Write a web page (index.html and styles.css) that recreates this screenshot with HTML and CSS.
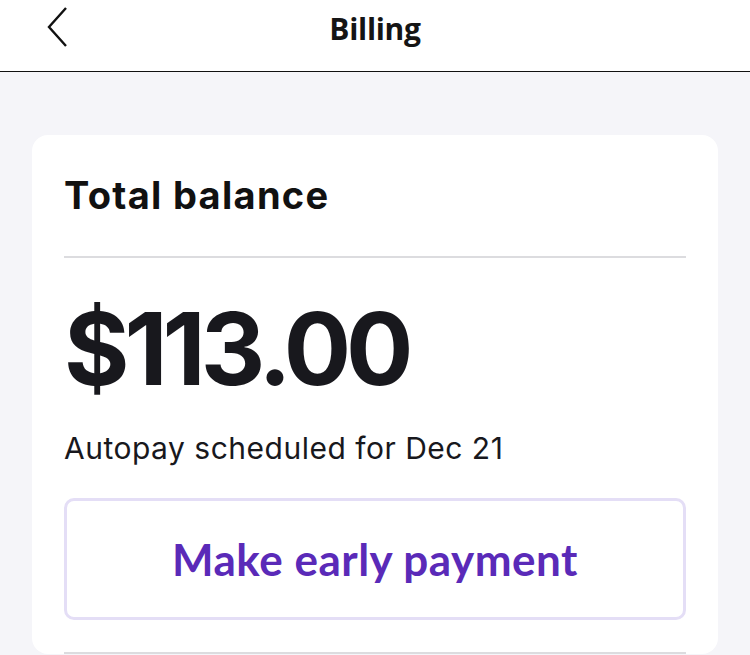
FILE: index.html
```html
<!DOCTYPE html>
<html>
<head>
<meta charset="utf-8">
<link rel="stylesheet" href="styles.css">
</head>
<body>
<header class="topbar">
  <button class="back" aria-label="Back">
    <svg width="24" height="42" viewBox="0 0 24 42"><path d="M20 2 L3 21 L20 40" fill="none" stroke="#111" stroke-width="2.4" stroke-linejoin="miter"/></svg>
  </button>
  <h1 class="title">Billing</h1>
</header>
<main class="content">
  <section class="card">
    <h2 class="card-title">Total balance</h2>
    <hr class="divider">
    <div class="amount">$113.00</div>
    <p class="autopay">Autopay scheduled for Dec 21</p>
    <button class="pay-btn">Make early payment</button>
    <hr class="divider bottom">
  </section>
</main>
</body>
</html>
```
FILE: styles.css
```css
* { box-sizing: border-box; }
html, body { margin: 0; padding: 0; }
body {
  width: 750px;
  height: 655px;
  overflow: hidden;
  background: #f5f5f9;
  font-family: Inter, "Liberation Sans", sans-serif;
  color: #15151a;
}
.topbar {
  height: 72px;
  background: #fff;
  border-bottom: 1.5px solid #111;
  display: flex;
  align-items: center;
  justify-content: center;
  position: relative;
}
.back {
  position: absolute;
  left: 46px;
  top: 6px;
  background: none;
  border: 0;
  padding: 0;
  display: flex;
}
.title {
  margin: 0;
  font-family: "Open Sans", sans-serif;
  font-weight: 700;
  font-size: 30px;
  letter-spacing: -0.3px;
  color: #151515;
  margin-top: -14px;
}
.content {
  padding: 63px 32px 0 32px;
}
.card {
  background: #fff;
  border-radius: 16px;
  padding: 36px 32px 0 32px;
}
.card-title {
  margin: 0;
  font-weight: 700;
  font-size: 38px;
  letter-spacing: 1.3px;
  line-height: 48px;
  color: #111;
}
.divider {
  border: 0;
  height: 2px;
  background: #dcdcdf;
  margin: 37px 0 0 0;
}
.amount {
  margin-top: 36px;
  font-weight: 700;
  font-size: 100px;
  line-height: 110px;
  letter-spacing: -5px;
  font-variant-numeric: proportional-nums;
  color: #18181d;
}
.autopay {
  margin: 25px 0 0 0;
  font-size: 30px;
  line-height: 38px;
  letter-spacing: 0.5px;
  color: #18181d;
}
.pay-btn {
  display: block;
  width: 100%;
  height: 122px;
  margin-top: 31px;
  background: #fff;
  border: 3px solid #e4def6;
  border-radius: 10px;
  font-family: Lato, sans-serif;
  font-weight: 700;
  font-size: 44px;
  color: #5a2ab8;
  letter-spacing: 0.5px;
}
.divider.bottom {
  margin-top: 32px;
}
```
